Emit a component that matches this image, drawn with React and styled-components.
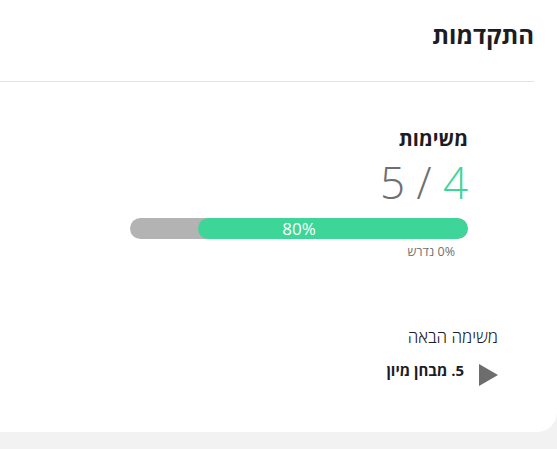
import React from "react";
import styled, { createGlobalStyle } from "styled-components";

const GlobalStyle = createGlobalStyle`
  body {
    margin: 0;
    background: #f2f2f2;
    font-family: "Open Sans", "DejaVu Sans", sans-serif;
  }
`;

const Card = styled.div`
  direction: rtl;
  width: 557px;
  height: 432px;
  background: #fff;
  border-radius: 0 0 20px 0;
  box-sizing: border-box;
`;

const Header = styled.div`
  height: 82px;
  margin-right: 23px;
  border-bottom: 1px solid #e4e4e4;
  box-sizing: border-box;
  display: flex;
  align-items: center;
  padding-bottom: 12px;
`;

const Title = styled.h2`
  margin: 0;
  font-size: 24px;
  font-weight: 700;
  color: #1c1c24;
`;

const Stats = styled.div`
  width: 338px;
  margin-right: 89px;
  margin-top: 44px;
  display: flex;
  flex-direction: column;
  align-items: flex-start;
`;

const StatLabel = styled.div`
  font-size: 20px;
  font-weight: 700;
  color: #1c1c24;
  line-height: 26px;
`;

const Count = styled.div`
  font-size: 44px;
  font-weight: 300;
  color: #6f6f6f;
  line-height: 56px;
  margin-top: 2px;
  direction: ltr;
`;

const Done = styled.span`
  color: #3dd598;
`;

const Bar = styled.div`
  position: relative;
  width: 100%;
  height: 21px;
  margin-top: 8px;
  border-radius: 11px;
  background: #b3b3b3;
  overflow: hidden;
`;

const Fill = styled.div`
  height: 100%;
  background: #3dd598;
  border-radius: 11px;
`;

const BarText = styled.span`
  position: absolute;
  inset: 0;
  color: #fff;
  font-size: 17px;
  line-height: 22px;
  text-align: center;
`;

const Required = styled.div`
  font-size: 12.5px;
  color: #6f6f6f;
  margin-top: 4px;
  margin-right: 13px;
  line-height: 17px;
`;

const Next = styled.div`
  margin-right: 59px;
  margin-top: 65px;
`;

const NextLabel = styled.div`
  font-size: 17px;
  font-weight: 300;
  color: #1c1c24;
  line-height: 24px;
`;

const NextRow = styled.div`
  display: flex;
  align-items: center;
  gap: 15px;
  margin-top: 15px;
`;

const Play = styled.svg`
  width: 19px;
  height: 22px;
  flex-shrink: 0;
`;

const TaskName = styled.span`
  font-size: 15px;
  font-weight: 700;
  color: #1c1c24;
  margin-top: -10px;
`;

export default function App() {
  const done = 4;
  const total = 5;
  const pct = Math.round((done / total) * 100);
  return (
    <>
      <GlobalStyle />
      <Card>
        <Header>
          <Title>התקדמות</Title>
        </Header>
        <Stats>
          <StatLabel>משימות</StatLabel>
          <Count>
            {total} / <Done>{done}</Done>
          </Count>
          <Bar>
            <Fill style={{ width: `${pct}%` }} />
            <BarText>{pct}%</BarText>
          </Bar>
          <Required>0% נדרש</Required>
        </Stats>
        <Next>
          <NextLabel>משימה הבאה</NextLabel>
          <NextRow>
            <Play viewBox="0 0 19 22">
              <path d="M0 0 L19 11 L0 22 Z" fill="#6d6d6d" />
            </Play>
            <TaskName>5. מבחן מיון</TaskName>
          </NextRow>
        </Next>
      </Card>
    </>
  );
}
